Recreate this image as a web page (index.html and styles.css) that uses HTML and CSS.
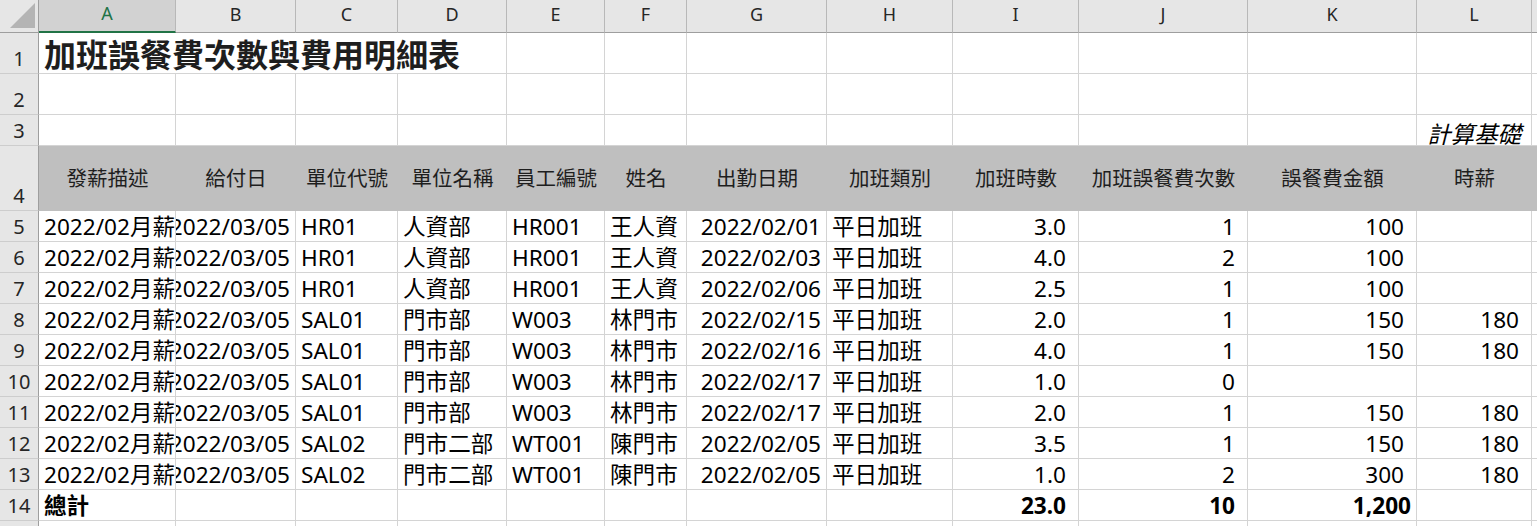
FILE: index.html
```html
<!DOCTYPE html>
<html lang="zh-Hant">
<head>
<meta charset="utf-8">
<title>加班誤餐費次數與費用明細表</title>
<link rel="stylesheet" href="styles.css">
</head>
<body>
<div class="sheet">
  <div class="corner"><svg width="38" height="32" viewBox="0 0 38 32"><polygon points="35,3 35,28 10,28" fill="#b4b4b4"/></svg></div>
  <div class="ch sel">A</div><div class="ch">B</div><div class="ch">C</div><div class="ch">D</div><div class="ch">E</div><div class="ch">F</div><div class="ch">G</div><div class="ch">H</div><div class="ch">I</div><div class="ch">J</div><div class="ch">K</div><div class="ch">L</div><div class="ch"></div>

  <div class="rh">1</div>
  <div class="c title">加班誤餐費次數與費用明細表</div>
  <div class="c"></div><div class="c"></div><div class="c"></div><div class="c"></div><div class="c"></div><div class="c"></div><div class="c"></div><div class="c"></div><div class="c"></div>

  <div class="rh">2</div>
  <div class="c"></div><div class="c"></div><div class="c"></div><div class="c"></div><div class="c"></div><div class="c"></div><div class="c"></div><div class="c"></div><div class="c"></div><div class="c"></div><div class="c"></div><div class="c"></div><div class="c"></div>

  <div class="rh">3</div>
  <div class="c"></div><div class="c"></div><div class="c"></div><div class="c"></div><div class="c"></div><div class="c"></div><div class="c"></div><div class="c"></div><div class="c"></div><div class="c"></div><div class="c"></div>
  <div class="c r note">計算基礎</div><div class="c"></div>

  <div class="rh">4</div>
  <div class="hd">發薪描述</div><div class="hd">給付日</div><div class="hd">單位代號</div><div class="hd">單位名稱</div><div class="hd">員工編號</div><div class="hd">姓名</div><div class="hd">出勤日期</div><div class="hd">加班類別</div><div class="hd">加班時數</div><div class="hd">加班誤餐費次數</div><div class="hd">誤餐費金額</div><div class="hd">時薪</div><div class="hd"></div>

  <div class="rh">5</div>
  <div class="c">2022/02月薪資</div><div class="c r">2022/03/05</div><div class="c">HR01</div><div class="c">人資部</div><div class="c">HR001</div><div class="c">王人資</div><div class="c r">2022/02/01</div><div class="c">平日加班</div><div class="c r n">3.0</div><div class="c r n">1</div><div class="c r n">100</div><div class="c"></div><div class="c"></div>

  <div class="rh">6</div>
  <div class="c">2022/02月薪資</div><div class="c r">2022/03/05</div><div class="c">HR01</div><div class="c">人資部</div><div class="c">HR001</div><div class="c">王人資</div><div class="c r">2022/02/03</div><div class="c">平日加班</div><div class="c r n">4.0</div><div class="c r n">2</div><div class="c r n">100</div><div class="c"></div><div class="c"></div>

  <div class="rh">7</div>
  <div class="c">2022/02月薪資</div><div class="c r">2022/03/05</div><div class="c">HR01</div><div class="c">人資部</div><div class="c">HR001</div><div class="c">王人資</div><div class="c r">2022/02/06</div><div class="c">平日加班</div><div class="c r n">2.5</div><div class="c r n">1</div><div class="c r n">100</div><div class="c"></div><div class="c"></div>

  <div class="rh">8</div>
  <div class="c">2022/02月薪資</div><div class="c r">2022/03/05</div><div class="c">SAL01</div><div class="c">門市部</div><div class="c">W003</div><div class="c">林門市</div><div class="c r">2022/02/15</div><div class="c">平日加班</div><div class="c r n">2.0</div><div class="c r n">1</div><div class="c r n">150</div><div class="c r n">180</div><div class="c"></div>

  <div class="rh">9</div>
  <div class="c">2022/02月薪資</div><div class="c r">2022/03/05</div><div class="c">SAL01</div><div class="c">門市部</div><div class="c">W003</div><div class="c">林門市</div><div class="c r">2022/02/16</div><div class="c">平日加班</div><div class="c r n">4.0</div><div class="c r n">1</div><div class="c r n">150</div><div class="c r n">180</div><div class="c"></div>

  <div class="rh">10</div>
  <div class="c">2022/02月薪資</div><div class="c r">2022/03/05</div><div class="c">SAL01</div><div class="c">門市部</div><div class="c">W003</div><div class="c">林門市</div><div class="c r">2022/02/17</div><div class="c">平日加班</div><div class="c r n">1.0</div><div class="c r n">0</div><div class="c"></div><div class="c"></div><div class="c"></div>

  <div class="rh">11</div>
  <div class="c">2022/02月薪資</div><div class="c r">2022/03/05</div><div class="c">SAL01</div><div class="c">門市部</div><div class="c">W003</div><div class="c">林門市</div><div class="c r">2022/02/17</div><div class="c">平日加班</div><div class="c r n">2.0</div><div class="c r n">1</div><div class="c r n">150</div><div class="c r n">180</div><div class="c"></div>

  <div class="rh">12</div>
  <div class="c">2022/02月薪資</div><div class="c r">2022/03/05</div><div class="c">SAL02</div><div class="c">門市二部</div><div class="c">WT001</div><div class="c">陳門市</div><div class="c r">2022/02/05</div><div class="c">平日加班</div><div class="c r n">3.5</div><div class="c r n">1</div><div class="c r n">150</div><div class="c r n">180</div><div class="c"></div>

  <div class="rh">13</div>
  <div class="c">2022/02月薪資</div><div class="c r">2022/03/05</div><div class="c">SAL02</div><div class="c">門市二部</div><div class="c">WT001</div><div class="c">陳門市</div><div class="c r">2022/02/05</div><div class="c">平日加班</div><div class="c r n">1.0</div><div class="c r n">2</div><div class="c r n">300</div><div class="c r n">180</div><div class="c"></div>

  <div class="rh">14</div>
  <div class="c b">總計</div><div class="c"></div><div class="c"></div><div class="c"></div><div class="c"></div><div class="c"></div><div class="c"></div><div class="c"></div><div class="c r n b">23.0</div><div class="c r n b">10</div><div class="c r b">1,200</div><div class="c"></div><div class="c"></div>

  <div class="rh">15</div>
  <div class="c"></div><div class="c"></div><div class="c"></div><div class="c"></div><div class="c"></div><div class="c"></div><div class="c"></div><div class="c"></div><div class="c"></div><div class="c"></div><div class="c"></div><div class="c"></div><div class="c"></div>
</div>
</body>
</html>
```
FILE: styles.css
```css
html, body {
  margin: 0;
  padding: 0;
  background: #ffffff;
}
body {
  width: 1537px;
  height: 526px;
  overflow: hidden;
  font-family: "Noto Sans", "Noto Sans CJK TC", sans-serif;
  color: #000;
}
.sheet {
  display: grid;
  grid-template-columns: 39px 137px 120px 102px 109px 98px 82px 140px 126px 126px 169px 169px 115px 60px;
  grid-template-rows: 33px 41px 41px 31px 65px repeat(11, 31px);
  width: 1592px;
}
.sheet > div {
  box-sizing: border-box;
  min-width: 0;
  overflow: hidden;
  white-space: nowrap;
}
.corner {
  background: #e6e6e6;
  border-right: 1px solid #9e9e9e;
  border-bottom: 1px solid #9e9e9e;
}
.corner svg { display: block; }
.ch {
  background: #e6e6e6;
  border-right: 1px solid #b8b8b8;
  border-bottom: 1px solid #9e9e9e;
  display: flex;
  align-items: center;
  justify-content: center;
  padding-bottom: 5px;
  font-size: 18px;
  line-height: 1;
  color: #262626;
}
.ch.sel {
  background: #d2d2d2;
  color: #217346;
  border-bottom: 2px solid #217346;
}
.rh {
  background: #e6e6e6;
  border-right: 1px solid #9e9e9e;
  border-bottom: 1px solid #cdcdcd;
  display: flex;
  align-items: flex-end;
  justify-content: center;
  font-size: 20px;
  line-height: 1;
  padding-bottom: 4px;
  color: #262626;
}
.c {
  border-right: 1px solid #d4d4d4;
  border-bottom: 1px solid #d4d4d4;
  display: flex;
  align-items: flex-end;
  justify-content: flex-start;
  font-size: 22.6px;
  line-height: 22px;
  padding: 0 5px 3px 5px;
}
.c.r { justify-content: flex-end; }
.c.n { padding-right: 12px; }
.c.b { font-weight: 700; }
.title {
  grid-column: span 4;
  font-family: "Noto Sans CJK TC", sans-serif;
  font-weight: 700;
  font-size: 32px;
  line-height: 32px;
  padding-bottom: 4px;
  color: #1e1e1e;
}
.note {
  font-style: italic;
  padding-right: 10px;
  padding-bottom: 0;
  font-size: 23.5px;
}
.hd {
  background: #bfbfbf;
  border-bottom: 1px solid #bfbfbf;
  display: flex;
  align-items: center;
  justify-content: center;
  font-size: 20.5px;
  line-height: 1;
  color: #1e1e1e;
}
```
